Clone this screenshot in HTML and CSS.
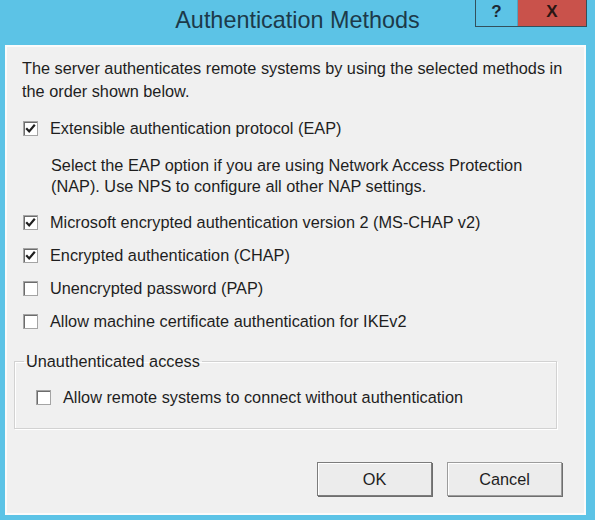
FILE: index.html
```html
<!DOCTYPE html>
<html>
<head>
<meta charset="utf-8">
<title>Authentication Methods</title>
<link rel="stylesheet" href="styles.css">
</head>
<body>
<div class="window">
  <div class="titlebar">
    <div class="spacer"></div>
    <div class="title">Authentication Methods</div>
    <div class="caption-btns">
      <span class="btn-help">?</span>
      <span class="btn-close">X</span>
    </div>
  </div>
  <div class="panel">
    <p class="intro">The server authenticates remote systems by using the selected methods in<br>the order shown below.</p>

    <label class="check-row"><span class="box"><svg viewBox="0 0 15 15" width="15" height="15"><path d="M3.2 7.2 L6.2 10.4 L11.8 3.8" fill="none" stroke="#1f1f1f" stroke-width="2.2"/></svg></span>Extensible authentication protocol (EAP)</label>

    <p class="note">Select the EAP option if you are using Network Access Protection<br>(NAP). Use NPS to configure all other NAP settings.</p>

    <label class="check-row"><span class="box"><svg viewBox="0 0 15 15" width="15" height="15"><path d="M3.2 7.2 L6.2 10.4 L11.8 3.8" fill="none" stroke="#1f1f1f" stroke-width="2.2"/></svg></span>Microsoft encrypted authentication version 2 (MS-CHAP v2)</label>
    <label class="check-row"><span class="box"><svg viewBox="0 0 15 15" width="15" height="15"><path d="M3.2 7.2 L6.2 10.4 L11.8 3.8" fill="none" stroke="#1f1f1f" stroke-width="2.2"/></svg></span>Encrypted authentication (CHAP)</label>
    <label class="check-row"><span class="box"></span>Unencrypted password (PAP)</label>
    <label class="check-row"><span class="box"></span>Allow machine certificate authentication for IKEv2</label>

    <fieldset class="group">
      <legend>Unauthenticated access</legend>
      <label class="check-row inner"><span class="box"></span>Allow remote systems to connect without authentication</label>
    </fieldset>

    <div class="actions">
      <button class="btn default">OK</button>
      <button class="btn">Cancel</button>
    </div>
  </div>
</div>
</body>
</html>
```

FILE: styles.css
```css
html, body {
  margin: 0;
  padding: 0;
}

body {
  background: #5cc3e6;
  font-family: "Liberation Sans", Arial, sans-serif;
  color: #1e1e1e;
}

.window {
  width: 595px;
  height: 520px;
  display: flex;
  flex-direction: column;
  background: #5cc3e6;
}

.titlebar {
  height: 45px;
  display: grid;
  grid-template-columns: 1fr auto 1fr;
  align-items: start;
}

.title {
  font-size: 23.4px;
  line-height: 41px;
  color: #1c3a4a;
  white-space: nowrap;
}

.caption-btns {
  justify-self: end;
  margin-right: 8px;
  display: flex;
  border: 1px solid #33505c;
  border-top: none;
  height: 27px;
  box-sizing: border-box;
}

.btn-help,
.btn-close {
  display: flex;
  align-items: center;
  justify-content: center;
  font-weight: bold;
  font-size: 17px;
  color: #1d2a34;
  padding-bottom: 3px;
  box-sizing: border-box;
}

.btn-help {
  width: 42px;
  background: #5cc3e6;
  border-right: 1px solid #4fa3c2;
}

.btn-close {
  width: 68px;
  background: #c9524b;
  color: #2a1614;
}

.panel {
  margin: 0 9px 5px 5px;
  height: 470px;
  box-sizing: border-box;
  background: #f0f0f0;
  border: 2px solid #fbfbfb;
  padding: 10px 22px 0 7px;
  font-size: 16.3px;
  display: flex;
  flex-direction: column;
  align-items: stretch;
}

.intro {
  margin: 0 0 9px 0;
  padding-left: 8px;
  line-height: 23px;
  white-space: nowrap;
}

.check-row {
  display: flex;
  align-items: center;
  height: 33px;
  padding-left: 9px;
  white-space: nowrap;
}

.box {
  width: 15px;
  height: 15px;
  flex: 0 0 15px;
  box-sizing: border-box;
  margin-right: 12px;
  background: #fff;
  border: 1px solid #a4a4a4;
  box-shadow: inset 1px 1px 0 #6c6c6c;
  position: relative;
}

.box svg {
  position: absolute;
  left: -1px;
  top: -1px;
}

.note {
  margin: 10px 0 9px 0;
  padding-left: 37px;
  line-height: 21px;
  white-space: nowrap;
}

.group {
  margin: 13px 5px 0 0;
  padding: 10px 0 14px 9px;
  border: 1px solid #d2d2d2;
  box-shadow: 1px 1px 0 #ffffff, inset 1px 1px 0 #ffffff;
  min-width: 0;
}

.group legend {
  padding: 0 2px;
  line-height: 20px;
}

.check-row.inner {
  padding-left: 12px;
}

.actions {
  display: flex;
  justify-content: flex-end;
  gap: 15px;
  margin-top: 33px;
}

.btn {
  width: 115px;
  height: 34px;
  font-family: "Liberation Sans", Arial, sans-serif;
  font-size: 16.3px;
  color: #1e1e1e;
  background: #ececec;
  border: 1px solid #9c9c9c;
  box-shadow: 1px 1px 0 #6e6e6e, inset 1px 1px 0 #ffffff;
  padding: 0;
}

.btn.default {
  border-color: #7c7c7c;
}
```
